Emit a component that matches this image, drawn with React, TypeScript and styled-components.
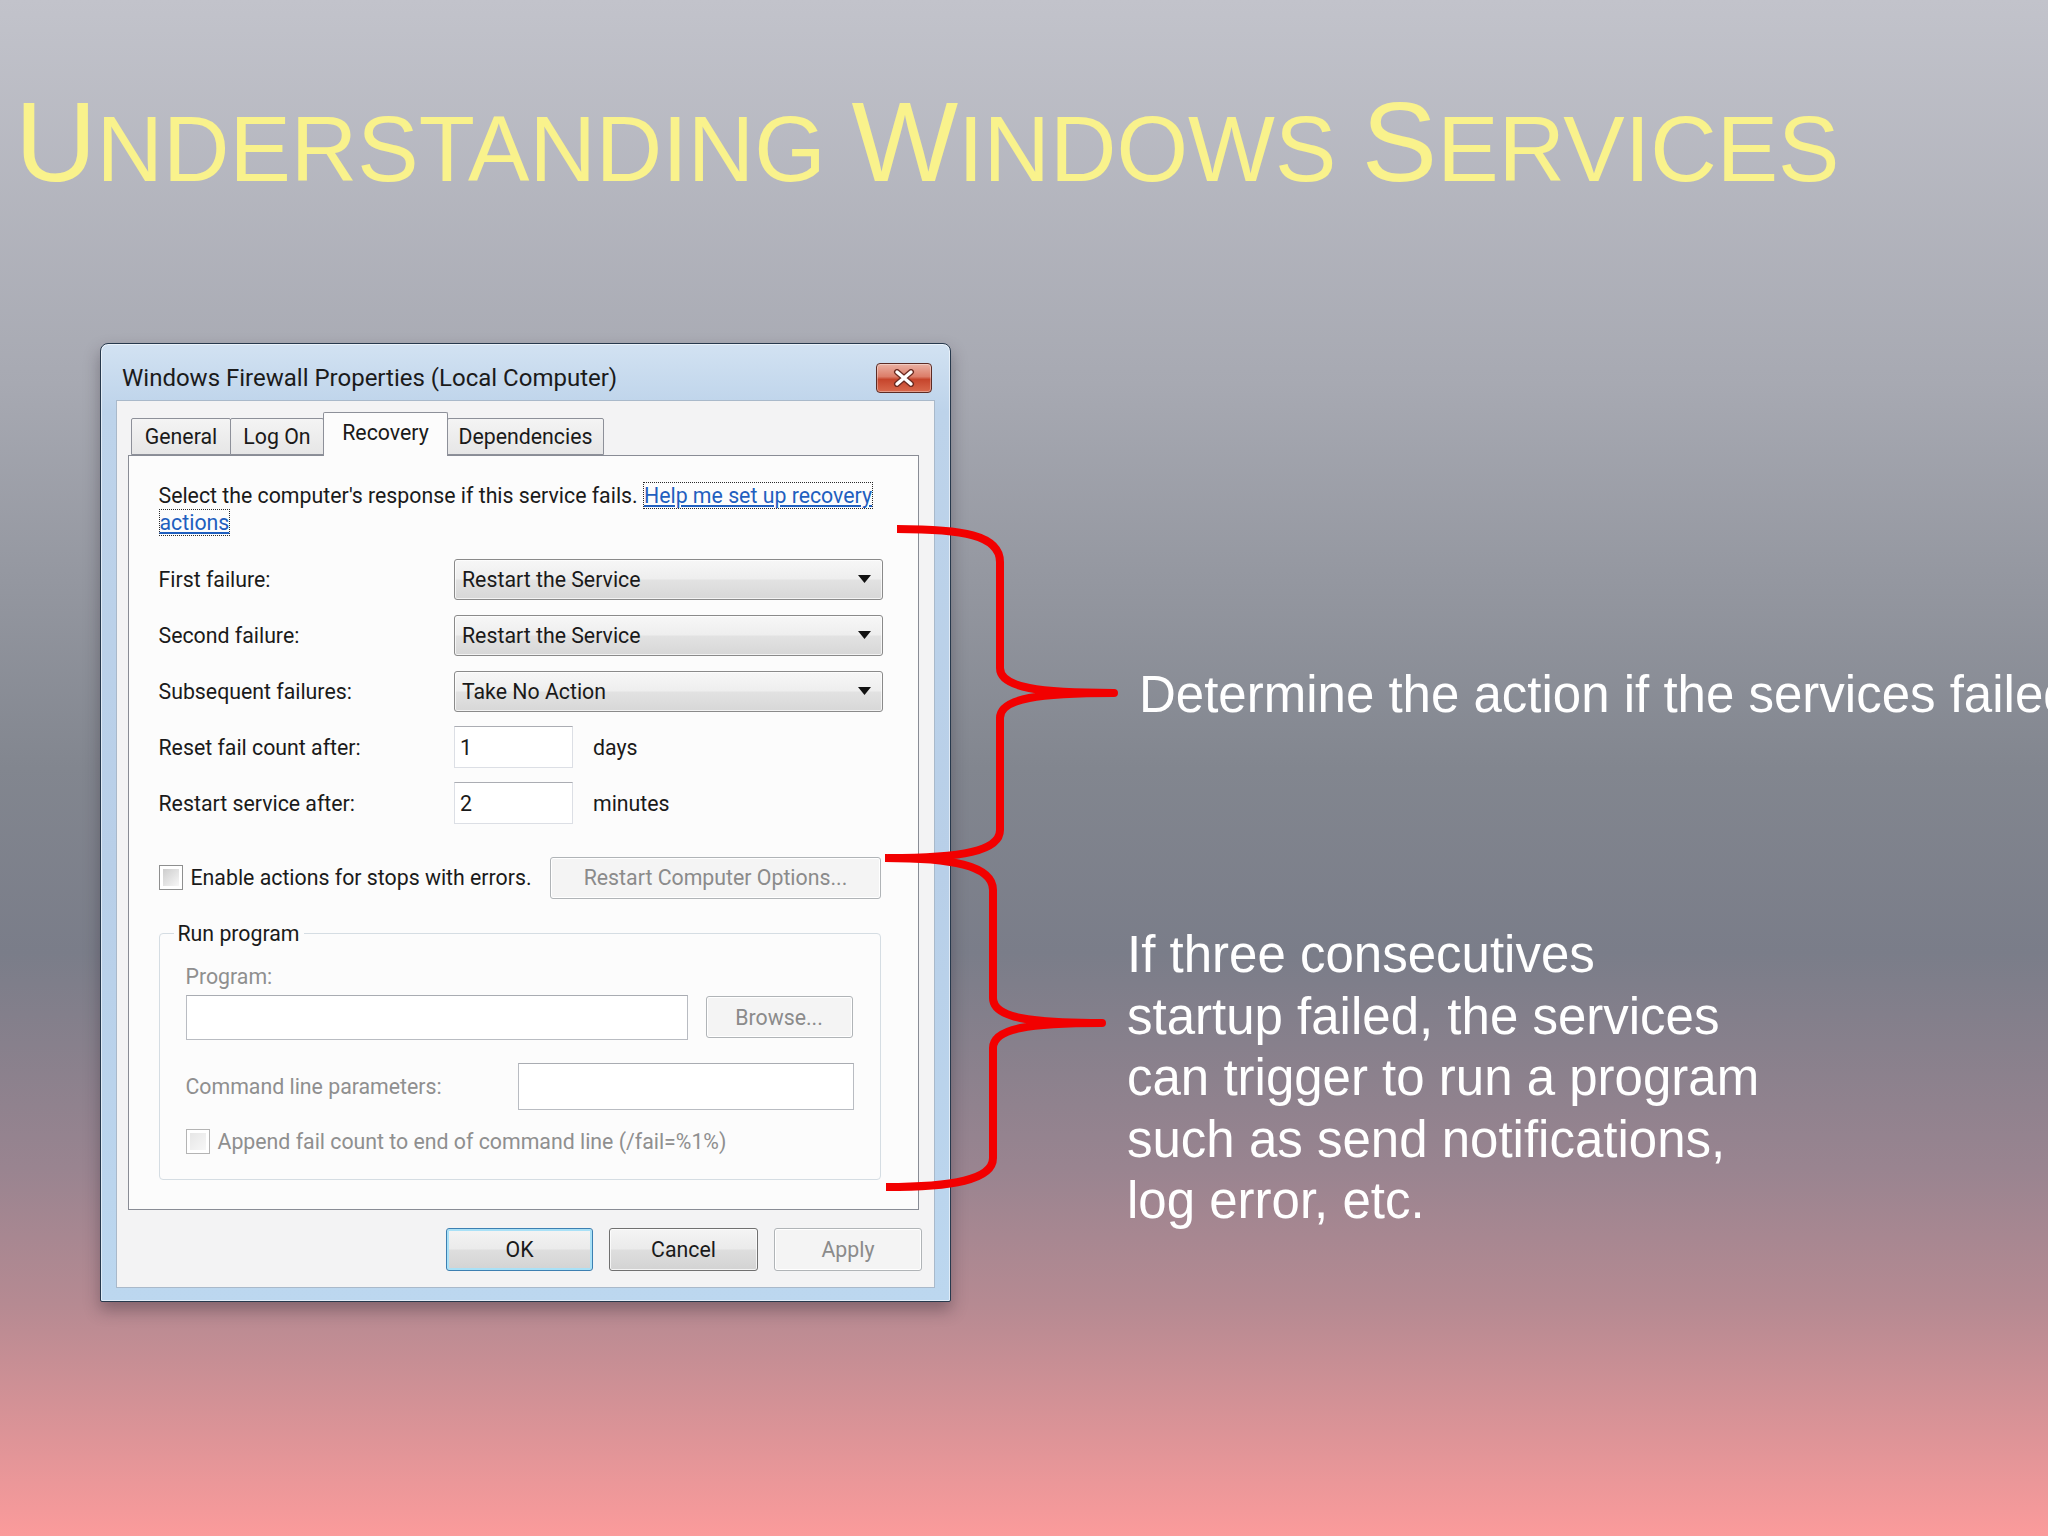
import React from 'react';
import styled, { createGlobalStyle } from 'styled-components';

const GlobalStyle = createGlobalStyle`
  html, body {
    margin: 0;
    padding: 0;
  }
  body {
    font-family: "Liberation Sans", Arial, sans-serif;
  }
`;

const Slide = styled.div`
  position: relative;
  width: 2048px;
  height: 1536px;
  overflow: hidden;
  background: linear-gradient(
    180deg,
    #c2c3cb 0%,
    #a7a9b2 25%,
    #82868f 50%,
    #7a7d89 62%,
    #998490 76%,
    #b68a92 85%,
    #fb9b9b 100%
  );
`;

const Heading = styled.h1`
  margin: 0;
  height: 210px;
  box-sizing: border-box;
  padding: 86px 0 0 15px;
  font-family: "Liberation Sans", Arial, sans-serif;
  font-weight: normal;
  font-size: 113px;
  line-height: 113px;
  color: #f9f28c;
  white-space: nowrap;
`;

const Small = styled.span`
  font-size: 92px;
`;

const Stage = styled.div`
  display: flex;
  align-items: flex-start;
  padding: 133px 0 0 100px;
`;

/* ---------- dialog ---------- */

const Window = styled.div`
  width: 851px;
  height: 959px;
  flex-shrink: 0;
  box-sizing: border-box;
  display: flex;
  flex-direction: column;
  border: 1px solid #27394d;
  border-radius: 8px 8px 2px 2px;
  background: linear-gradient(180deg, #d2e2f2 0%, #bdd3ea 7%, #b8cfe8 55%, #bcd7ef 100%);
  box-shadow: 0 8px 16px rgba(40, 30, 40, 0.35), inset 0 0 0 1px rgba(255, 255, 255, 0.55);
  font-family: Roboto, "Noto Sans", sans-serif;
  font-size: 21.3px;
  color: #1a1a1a;
`;

const TitleBar = styled.div`
  height: 56px;
  box-sizing: border-box;
  padding: 12px 18px 0 21px;
  display: flex;
  align-items: center;
  justify-content: space-between;
`;

const WindowTitle = styled.span`
  font-size: 24px;
  color: #1b1b1b;
`;

const CloseButton = styled.div`
  width: 56px;
  height: 30px;
  box-sizing: border-box;
  display: flex;
  align-items: center;
  justify-content: center;
  border: 1px solid #5c2b24;
  border-radius: 4px;
  background: linear-gradient(180deg, #eab1a3 0%, #dc7d69 45%, #c6452c 55%, #d9694d 100%);
  box-shadow: inset 0 0 0 1px rgba(255, 255, 255, 0.35);
`;

const Client = styled.div`
  height: 888px;
  margin: 0 15px;
  box-sizing: border-box;
  padding: 0 15px 0 11px;
  border: 1px solid #a9b9ca;
  background: #f3f3f4;
  display: flex;
  flex-direction: column;
`;

const TabStrip = styled.div`
  height: 54px;
  display: flex;
  align-items: flex-end;
  padding-left: 4px;
`;

const Tab = styled.div<{ $active?: boolean; $w: number }>`
  width: ${(p) => p.$w}px;
  height: ${(p) => (p.$active ? 44 : 37)}px;
  margin-bottom: ${(p) => (p.$active ? -1 : 0)}px;
  margin-left: -1px;
  box-sizing: border-box;
  display: flex;
  align-items: center;
  justify-content: center;
  padding-bottom: ${(p) => (p.$active ? 4 : 0)}px;
  border: 1px solid #8d9099;
  border-bottom: ${(p) => (p.$active ? 'none' : '1px solid #8d9099')};
  border-radius: 2px 2px 0 0;
  background: ${(p) => (p.$active ? '#fcfcfc' : 'linear-gradient(180deg, #f4f4f4 0%, #e6e6e6 100%)')};
  position: relative;
  z-index: ${(p) => (p.$active ? 1 : 0)};
`;

const Panel = styled.div`
  height: 755px;
  box-sizing: border-box;
  padding: 26px 35px 0 29.5px;
  border: 1px solid #898c95;
  background: #fcfcfc;
  display: flex;
  flex-direction: column;
`;

const Intro = styled.p`
  margin: 0;
  line-height: 27px;
  white-space: nowrap;
`;

const HelpLink = styled.span`
  color: #1f5fbf;
  text-decoration: underline;
  border: 1px dotted #2a2a2a;
  -webkit-box-decoration-break: clone;
  box-decoration-break: clone;
`;

const FieldGrid = styled.div`
  margin-top: 15.3px;
  display: grid;
  grid-template-columns: 295.5px auto;
  grid-auto-rows: 56px;
  align-items: center;
`;

const Label = styled.span<{ $dim?: boolean }>`
  line-height: 27px;
  color: ${(p) => (p.$dim ? '#8f8f8f' : '#1a1a1a')};
  white-space: nowrap;
`;

const Combo = styled.div`
  width: 429px;
  height: 41px;
  box-sizing: border-box;
  display: flex;
  align-items: center;
  justify-content: space-between;
  padding: 0 11px 0 7px;
  border: 1px solid #8a8a8a;
  border-radius: 3px;
  background: linear-gradient(180deg, #f7f7f7 0%, #eeeeee 48%, #e2e2e2 52%, #d7d7d7 100%);
  box-shadow: inset 0 0 0 1px rgba(255, 255, 255, 0.7);
`;

const SpinRow = styled.div`
  display: flex;
  align-items: center;
  gap: 20px;
`;

const TextBox = styled.div<{ $w: number; $h: number; $dim?: boolean }>`
  width: ${(p) => p.$w}px;
  height: ${(p) => p.$h}px;
  flex-shrink: 0;
  box-sizing: border-box;
  display: flex;
  align-items: center;
  padding-left: 5px;
  background: #ffffff;
  border: 1px solid ${(p) => (p.$dim ? '#b9bcc2' : '#dcdfe5')};
  border-top-color: ${(p) => (p.$dim ? '#a9acb2' : '#abadb3')};
`;

const CheckRow = styled.div<{ $top: number; $h: number }>`
  margin-top: ${(p) => p.$top}px;
  height: ${(p) => p.$h}px;
  display: flex;
  align-items: center;
`;

const CheckBox = styled.span<{ $dim?: boolean }>`
  width: 24px;
  height: 25px;
  flex-shrink: 0;
  box-sizing: border-box;
  padding: 3px;
  margin-right: 8px;
  border: 1px solid ${(p) => (p.$dim ? '#b4b4b4' : '#8e8f8f')};
  background: linear-gradient(135deg, ${(p) => (p.$dim ? '#e6e6e6' : '#cdcdcd')} 0%, #f7f7f7 100%) content-box, #ffffff;
`;

const PushButton = styled.div<{ $kind: 'default' | 'normal' | 'disabled'; $w: number; $h: number }>`
  width: ${(p) => p.$w}px;
  height: ${(p) => p.$h}px;
  flex-shrink: 0;
  box-sizing: border-box;
  display: flex;
  align-items: center;
  justify-content: center;
  border-radius: 3px;
  border: 1px solid
    ${(p) => (p.$kind === 'default' ? '#3c7fb1' : p.$kind === 'normal' ? '#707070' : '#b0b4b7')};
  color: ${(p) => (p.$kind === 'disabled' ? '#8b8b8b' : '#1a1a1a')};
  background: ${(p) =>
    p.$kind === 'disabled'
      ? '#f4f4f4'
      : 'linear-gradient(180deg, #f4f4f4 0%, #ebebeb 48%, #dedede 52%, #d3d3d3 100%)'};
  box-shadow: ${(p) =>
    p.$kind === 'default'
      ? 'inset 0 0 0 2px #a9e1f7'
      : p.$kind === 'normal'
      ? 'inset 0 0 0 1px rgba(255,255,255,0.75)'
      : 'inset 0 0 0 1px #ffffff'};
`;

const PushSpacer = styled.div`
  margin-left: auto;
  margin-right: 2px;
`;

const GroupBox = styled.fieldset`
  margin: 21.5px 2px 0 0;
  padding: 15.7px 26px 25px 26px;
  border: 1px solid #d5dde3;
  border-radius: 4px;
  min-inline-size: 0;
`;

const GroupLegend = styled.legend`
  margin-left: -12px;
  padding: 0 4px;
  line-height: 27px;
`;

const ProgramRow = styled.div`
  margin-top: 4.8px;
  height: 45px;
  display: flex;
  align-items: center;
  gap: 18px;
`;

const ParamRow = styled.div`
  margin-top: 23px;
  height: 47px;
  display: flex;
  align-items: center;
  justify-content: space-between;
`;

const ButtonBar = styled.div`
  margin: 18px -3px 0 0;
  display: flex;
  justify-content: flex-end;
  gap: 16px;
`;

/* ---------- notes ---------- */

const Notes = styled.div`
  margin-left: 176px;
  padding-top: 320.6px;
  font-family: "Liberation Sans", Arial, sans-serif;
  font-size: 51px;
  line-height: 61.5px;
  color: #ffffff;
  white-space: nowrap;
`;

const Note = styled.p<{ $indent?: number; $top?: number }>`
  margin: ${(p) => p.$top ?? 0}px 0 0 0;
  padding-left: ${(p) => p.$indent ?? 0}px;
`;

const BraceLayer = styled.svg`
  position: absolute;
  left: 0;
  top: 0;
  width: 2048px;
  height: 1536px;
  pointer-events: none;
`;

const Arrow = () => (
  <svg width="13" height="8" viewBox="0 0 13 8">
    <path d="M0 0 H13 L6.5 8 Z" fill="#111" />
  </svg>
);

const CloseGlyph = () => (
  <svg width="24" height="18" viewBox="0 0 24 18">
    <path d="M5 3 L19 15 M19 3 L5 15" stroke="#6b2a20" strokeWidth="6" strokeLinecap="round" />
    <path d="M5 3 L19 15 M19 3 L5 15" stroke="#ffffff" strokeWidth="3.4" strokeLinecap="round" />
  </svg>
);

const tabs = [
  { label: 'General', w: 100 },
  { label: 'Log On', w: 94 },
  { label: 'Recovery', w: 125, active: true },
  { label: 'Dependencies', w: 157 },
];

const braces = [
  'M897,529 C962,529 1000,535 1000,562 L1000,668 C1000,688 1040,693 1114,693 C1040,693 1000,698 1000,718 L1000,830 C1000,851 962,858 888,858',
  'M885,858 C950,858 993,865 993,890 L993,998 C993,1018 1030,1023 1102,1023 C1030,1023 993,1028 993,1048 L993,1158 C993,1180 952,1187 886,1187',
];

export default function App() {
  return (
    <>
      <GlobalStyle />
      <Slide>
        <Heading>
          U<Small>NDERSTANDING </Small>W<Small>INDOWS </Small>S<Small>ERVICES</Small>
        </Heading>

        <Stage>
          <Window>
            <TitleBar>
              <WindowTitle>Windows Firewall Properties (Local Computer)</WindowTitle>
              <CloseButton>
                <CloseGlyph />
              </CloseButton>
            </TitleBar>

            <Client>
              <TabStrip>
                {tabs.map((t) => (
                  <Tab key={t.label} $w={t.w} $active={t.active}>
                    {t.label}
                  </Tab>
                ))}
              </TabStrip>

              <Panel>
                <Intro>
                  Select the computer's response if this service fails.{' '}
                  <HelpLink>
                    Help me set up recovery
                    <br />
                    actions
                  </HelpLink>
                </Intro>

                <FieldGrid>
                  <Label>First failure:</Label>
                  <Combo>
                    Restart the Service
                    <Arrow />
                  </Combo>
                  <Label>Second failure:</Label>
                  <Combo>
                    Restart the Service
                    <Arrow />
                  </Combo>
                  <Label>Subsequent failures:</Label>
                  <Combo>
                    Take No Action
                    <Arrow />
                  </Combo>
                  <Label>Reset fail count after:</Label>
                  <SpinRow>
                    <TextBox $w={119} $h={42}>1</TextBox>
                    <Label>days</Label>
                  </SpinRow>
                  <Label>Restart service after:</Label>
                  <SpinRow>
                    <TextBox $w={119} $h={42}>2</TextBox>
                    <Label>minutes</Label>
                  </SpinRow>
                </FieldGrid>

                <CheckRow $top={25.5} $h={42}>
                  <CheckBox />
                  <Label>Enable actions for stops with errors.</Label>
                  <PushSpacer>
                    <PushButton $kind="disabled" $w={331} $h={42}>
                      Restart Computer Options...
                    </PushButton>
                  </PushSpacer>
                </CheckRow>

                <GroupBox>
                  <GroupLegend>Run program</GroupLegend>
                  <Label $dim>Program:</Label>
                  <ProgramRow>
                    <TextBox $w={502} $h={45} $dim />
                    <PushButton $kind="disabled" $w={147} $h={42}>
                      Browse...
                    </PushButton>
                  </ProgramRow>
                  <ParamRow>
                    <Label $dim>Command line parameters:</Label>
                    <TextBox $w={336} $h={47} $dim />
                  </ParamRow>
                  <CheckRow $top={19} $h={25}>
                    <CheckBox $dim />
                    <Label $dim>Append fail count to end of command line (/fail=%1%)</Label>
                  </CheckRow>
                </GroupBox>
              </Panel>

              <ButtonBar>
                <PushButton $kind="default" $w={147} $h={43}>
                  OK
                </PushButton>
                <PushButton $kind="normal" $w={149} $h={43}>
                  Cancel
                </PushButton>
                <PushButton $kind="disabled" $w={148} $h={43}>
                  Apply
                </PushButton>
              </ButtonBar>
            </Client>
          </Window>

          <Notes>
            <Note $indent={12}>Determine the action if the services failed</Note>
            <Note $top={199.2}>
              If three consecutives
              <br />
              startup failed, the services
              <br />
              can trigger to run a program
              <br />
              such as send notifications,
              <br />
              log error, etc.
            </Note>
          </Notes>
        </Stage>

        <BraceLayer viewBox="0 0 2048 1536">
          {braces.map((d, i) => (
            <path key={i} d={d} fill="none" stroke="#f20000" strokeWidth="8" strokeLinejoin="round" strokeLinecap="butt" />
          ))}
        </BraceLayer>
      </Slide>
    </>
  );
}
